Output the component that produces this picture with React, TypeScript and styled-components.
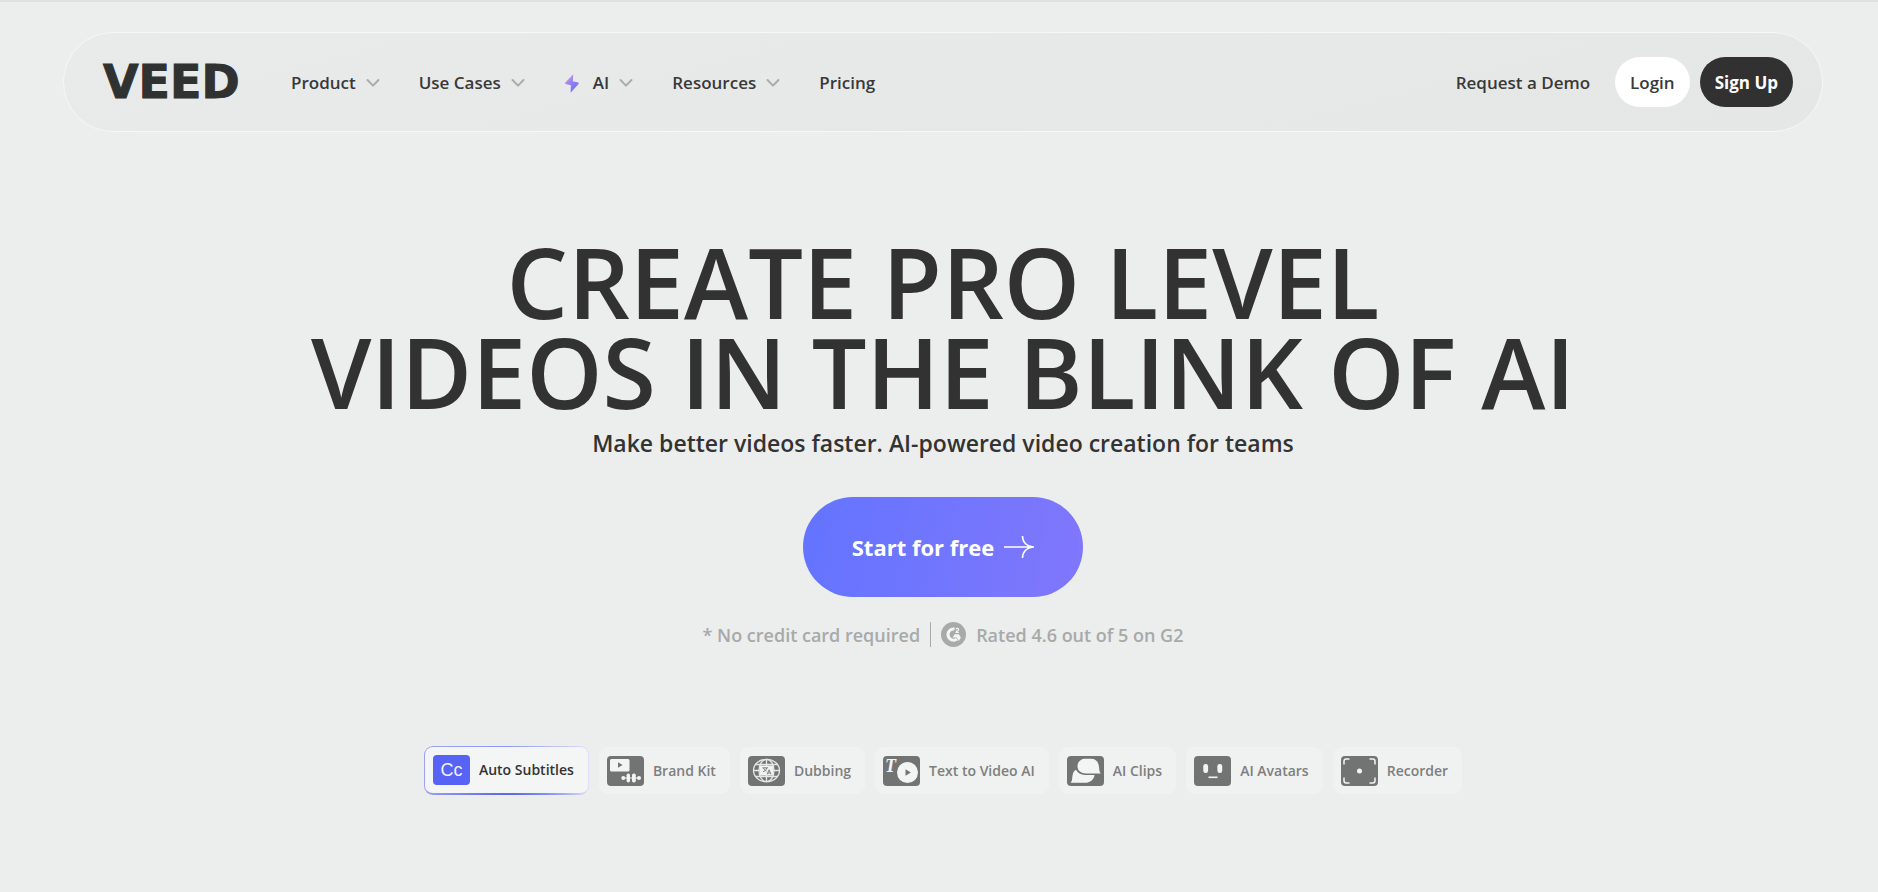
import React from 'react';
import styled, { createGlobalStyle } from 'styled-components';

const GlobalStyle = createGlobalStyle`
  *, *::before, *::after { box-sizing: border-box; }
  html { background: #ebeeed; }
  body {
    margin: 0;
    color: #333;
    font-family: "Open Sans", "Noto Sans", sans-serif;
    font-weight: 600;
  }
  button { font: inherit; color: inherit; cursor: pointer; }
  a { color: inherit; text-decoration: none; }
`;

const Page = styled.div`
  min-height: 100vh;
  border-top: 2px solid #dfe1e0;
  padding: 30px 55px 96px 63px;
  background: #ebeeed;
`;

const Header = styled.header`
  display: flex;
  align-items: center;
  height: 100px;
  padding: 0 29px 0 39px;
  border: 1px solid #f6f8f7;
  border-radius: 50px;
  background: linear-gradient(165deg, #e9ebea, #e5e7e6);
  font-size: 17px;
  line-height: 24px;
  color: #383939;
`;

const Logo = styled.a`
  width: 143px;
  margin-right: 45px;
  font-family: "DejaVu Sans", sans-serif;
  font-size: 46px;
  font-weight: 700;
  line-height: 48px;
  color: #303131;
  -webkit-text-stroke: 1px #303131;
`;

const Nav = styled.nav`
  display: flex;
  align-items: center;
  gap: 39px;
  flex: 1;
  padding-top: 2px;
`;

const NavButton = styled.button`
  display: flex;
  align-items: center;
  gap: 10px;
  padding: 0;
  border: 0;
  background: none;
`;

const Actions = styled.div`
  display: flex;
  align-items: center;
  gap: 10px;
`;

const DemoLink = styled.a`
  padding-top: 2px;
  margin-right: 15px;
`;

const PillLink = styled.a<{ $dark?: boolean }>`
  padding: 14px 15px 12px;
  border-radius: 25px;
  background: ${(p) => (p.$dark ? '#313131' : '#fff')};
  color: ${(p) => (p.$dark ? '#fff' : '#383939')};
  font-weight: ${(p) => (p.$dark ? 700 : 600)};
`;

const Hero = styled.main`
  display: flex;
  flex-direction: column;
  align-items: center;
  padding-top: 104px;
  text-align: center;
`;

const Title = styled.h1`
  margin: 0;
  font-size: 97px;
  font-weight: 600;
  line-height: 90px;
  color: #323232;
`;

const Subtitle = styled.p`
  margin: 8px 0 35px;
  font-size: 23px;
  line-height: 38px;
`;

const StartLink = styled.a`
  display: flex;
  align-items: center;
  justify-content: center;
  gap: 10px;
  height: 100px;
  padding: 0 49px;
  border-radius: 50px;
  background: linear-gradient(100deg, #6374ff, #8077fc);
  color: #fff;
  font-size: 22px;
  font-weight: 700;
  line-height: 32px;
`;

const Notes = styled.div`
  display: flex;
  align-items: center;
  gap: 10px;
  margin: 25px 0 99px;
  font-size: 18px;
  line-height: 25px;
  color: #a8a9a9;
`;

const Note = styled.span`
  height: 25px;
  padding-top: 1px;
`;

const Divider = styled.span`
  width: 1px;
  height: 25px;
  background: #a8a9a9;
`;

const Features = styled.div`
  display: flex;
  flex-wrap: wrap;
  align-items: center;
  justify-content: center;
  gap: 10px;
`;

const Chip = styled.button<{ $active?: boolean }>`
  display: flex;
  align-items: center;
  gap: 9px;
  height: ${(p) => (p.$active ? 49 : 47)}px;
  padding: 0 14px 0 8px;
  border: ${(p) => (p.$active ? '1px solid transparent' : '0')};
  border-bottom-width: ${(p) => (p.$active ? 2 : 0)}px;
  border-radius: 9px;
  background: ${(p) =>
    p.$active
      ? `linear-gradient(#f4f6f6, #f4f6f6) padding-box,
         radial-gradient(ellipse 50% 50% at 50% 100%, #5a68ee, transparent) border-box,
         linear-gradient(90deg, #9fa2f2, #8f98f0 50%, #dedffa) border-box`
      : '#f0f2f1'};
  color: ${(p) => (p.$active ? '#333' : '#7d7f7e')};
  font-size: 14px;
  line-height: 20px;
`;

const CaptionTile = styled.span`
  width: 37px;
  height: 30px;
  border-radius: 4px;
  background: #5763f4;
  color: #f4f5ff;
  font-family: "Liberation Sans", sans-serif;
  font-size: 18px;
  font-weight: 400;
  line-height: 30px;
  text-align: center;
`;

const Chevron = () => (
  <svg width="14" height="10" viewBox="0 0 14 10" fill="none" aria-hidden="true">
    <path d="M1.5 2 7 7.6 12.5 2" stroke="#a9abaa" strokeWidth="2" strokeLinecap="round" strokeLinejoin="round" />
  </svg>
);

const Bolt = () => (
  <svg width="19" height="19" viewBox="0 0 19 19" aria-hidden="true">
    <defs>
      <linearGradient id="bolt" x1="0" y1="0" x2="0.7" y2="1">
        <stop offset="0.15" stopColor="#cf9be2" />
        <stop offset="0.5" stopColor="#9581ef" />
        <stop offset="1" stopColor="#6772fb" />
      </linearGradient>
    </defs>
    <path d="M9.200.3 1.300 8.600c-.5.600-.3 1.200.4 1.400l5.200 1.300-.3 7.400 7.900-8.800c.4-.5.2-1.200-.4-1.300L8.900 7.200Z" fill="url(#bolt)" />
  </svg>
);

const Arrow = () => (
  <svg width="30" height="22" viewBox="0 0 30 22" fill="none" stroke="#fff" strokeWidth="1.5" aria-hidden="true">
    <path d="M0 11h30M18.500 0C18.500 6.500 23 10.500 29 11 23 11.500 18.500 15.500 18.500 22" />
  </svg>
);

const G2Badge = () => (
  <svg width="25" height="25" viewBox="0 0 25 25" fill="none" aria-hidden="true">
    <circle cx="12.500" cy="12.500" r="12.500" fill="#a8a9a9" />
    <path d="M13.500 7A5.600 5.600 0 1 0 16 17" stroke="#f4f5f5" strokeWidth="3" />
    <path d="M13.600 12.200h4.300l2 3.300-2.100 3.500-2-3.500h-4.200Z" fill="#f4f5f5" />
    <path d="M15 7.300c.3-1.300 2.700-1.300 2.700.1 0 1.200-2.500 1.600-2.600 3h2.800" stroke="#f4f5f5" strokeWidth="1.100" />
  </svg>
);

const Tile = ({ children }: { children: React.ReactNode }) => (
  <svg width="37" height="30" viewBox="0 0 37 30" fill="none" aria-hidden="true">
    <rect width="37" height="30" rx="4" fill="#727473" />
    {children}
  </svg>
);

const BrandIcon = () => (
  <Tile>
    <rect x="3" y="3" width="19.500" height="12.500" rx="1.500" fill="#f3f5f4" />
    <path d="M11 6.200v5.600l4.600-2.800Z" fill="#727473" />
    <path d="M15 22h18" stroke="#f3f5f4" strokeWidth="1" />
    <g fill="#f3f5f4">
      <circle cx="16.300" cy="22" r="2" />
      <rect x="19.600" y="17.500" width="3.400" height="9" rx="1.700" />
      <rect x="25" y="17.500" width="3.800" height="9" rx="1.700" />
      <circle cx="32" cy="22" r="2" />
    </g>
  </Tile>
);

const DubbingIcon = () => (
  <Tile>
    <g stroke="#e6e8e7" strokeWidth="1.300">
      <ellipse cx="18.500" cy="14.500" rx="13" ry="11.200" />
      <ellipse cx="18.500" cy="14.500" rx="7.500" ry="11.200" />
      <path d="M18.500 3.300v22.400M7.500 8.500h22M7.500 20.500h22M5.500 14.500h26" />
    </g>
    <rect x="12" y="9.500" width="13" height="10" fill="#f0f2f1" />
    <path d="M14.500 11.800h5.500M15.500 12c.8 1.800 2 2.800 3 3.200M18.800 12c-.6 1.800-2 3-3.800 3.800M19.200 18.300l1.900-4.500 1.900 4.500M19.900 17h2.400" stroke="#727473" strokeWidth=".9" />
  </Tile>
);

const TileLetter = styled.text`
  font-family: "Liberation Serif", serif;
  font-size: 18px;
  font-style: italic;
  font-weight: 700;
`;

const TextVideoIcon = () => (
  <Tile>
    <TileLetter x="2" y="16" fill="#f3f5f4">T</TileLetter>
    <circle cx="24.500" cy="16.500" r="10.500" fill="#f3f5f4" />
    <path d="M22.500 13.300v6.400l5.400-3.200Z" fill="#727473" />
  </Tile>
);

const ClipsIcon = () => (
  <Tile>
    <path d="M9 13.800C5.600 15.300 5.500 20 5 24c-.2 1.200-.7 2-1.500 2.700H18c5 0 9-3 9.500-7.800H18c-4 0-7.500-2-9-5.100Z" fill="#f3f5f4" />
    <path d="M18.500 2.800H24c5 0 7.500 3.200 8 8 .2 3.500.5 5 1.800 6.700H19c-5 0-8.500-2.800-8.500-7.200s3.300-7.500 8-7.500Z" fill="#f3f5f4" />
  </Tile>
);

const AvatarIcon = () => (
  <Tile>
    <g fill="#f3f5f4">
      <rect x="9.300" y="8" width="4.800" height="9" rx="2.200" />
      <rect x="23.400" y="8" width="4.800" height="9" rx="2.200" />
      <rect x="14.500" y="20.500" width="9" height="1.600" />
    </g>
  </Tile>
);

const RecorderIcon = () => (
  <Tile>
    <path d="M3 8.500V5.200C3 3.800 3.800 3 5.200 3H8.500M28.500 3h3.300C33.200 3 34 3.800 34 5.200V8.500M34 21.500v3.300c0 1.400-.8 2.200-2.200 2.200H28.500M8.500 27H5.200C3.800 27 3 26.200 3 24.800V21.500" stroke="#f3f5f4" strokeWidth="1.500" />
    <circle cx="18.500" cy="15" r="2.500" fill="#f3f5f4" />
  </Tile>
);

const features = [
  { label: 'Brand Kit', icon: <BrandIcon /> },
  { label: 'Dubbing', icon: <DubbingIcon /> },
  { label: 'Text to Video AI', icon: <TextVideoIcon /> },
  { label: 'AI Clips', icon: <ClipsIcon /> },
  { label: 'AI Avatars', icon: <AvatarIcon /> },
  { label: 'Recorder', icon: <RecorderIcon /> },
];

export default function App() {
  return (
    <>
      <GlobalStyle />
      <Page>
        <Header>
          <Logo href="#">VEED</Logo>
          <Nav>
            <NavButton>Product<Chevron /></NavButton>
            <NavButton>Use Cases<Chevron /></NavButton>
            <NavButton><Bolt />AI<Chevron /></NavButton>
            <NavButton>Resources<Chevron /></NavButton>
            <a href="#pricing">Pricing</a>
          </Nav>
          <Actions>
            <DemoLink href="#demo">Request a Demo</DemoLink>
            <PillLink href="#login">Login</PillLink>
            <PillLink href="#signup" $dark>Sign Up</PillLink>
          </Actions>
        </Header>
        <Hero>
          <Title>CREATE PRO LEVEL<br />VIDEOS IN THE BLINK OF AI</Title>
          <Subtitle>Make better videos faster. AI-powered video creation for teams</Subtitle>
          <StartLink href="#start">Start for free<Arrow /></StartLink>
          <Notes>
            <Note>* No credit card required</Note>
            <Divider />
            <G2Badge />
            <Note>Rated 4.6 out of 5 on G2</Note>
          </Notes>
          <Features>
            <Chip $active><CaptionTile aria-hidden="true">Cc</CaptionTile>Auto Subtitles</Chip>
            {features.map((f) => (
              <Chip key={f.label}>{f.icon}{f.label}</Chip>
            ))}
          </Features>
        </Hero>
      </Page>
    </>
  );
}
